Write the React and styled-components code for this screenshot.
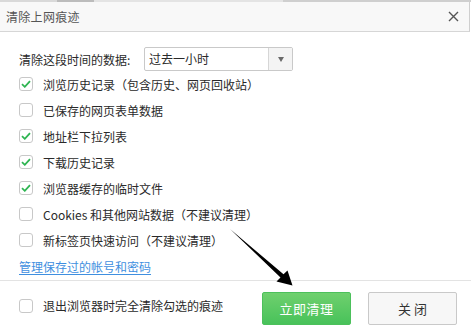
import React from "react";
import styled, { createGlobalStyle } from "styled-components";

const Global = createGlobalStyle`
  html, body { margin: 0; padding: 0; background: #fff; }
  body { font-family: "Noto Sans CJK SC", "Microsoft YaHei", sans-serif; width: 471px; height: 329px; overflow: hidden; }
`;

const Page = styled.div`
  position: relative;
  width: 471px;
  height: 329px;
  background: #fff;
`;

const TopStrip = styled.div`
  height: 2px;
  background: linear-gradient(90deg, #d9d9d9 0 12%, #bcbcbc 12% 20%, #e4e4e4 20% 60%, #cfcfcf 60% 100%);
`;

const TitleBar = styled.div`
  height: 29px;
  display: flex;
  align-items: center;
  justify-content: space-between;
  padding: 0 9px 0 6px;
  background: #f8f8f8;
  border-bottom: 1px solid #d6d6d6;
  border-right: 1px solid #cfcfcf;
  margin-right: 1px;
`;

const Title = styled.span`
  font-size: 12px;
  color: #555;
  letter-spacing: 0.3px;
`;

const CloseX = styled.svg`
  width: 11px;
  height: 11px;
  margin-right: 1px;
`;

const Content = styled.div`
  padding: 15px 0 0 19px;
  height: 229px;
  box-sizing: border-box;
`;

const RangeRow = styled.div`
  display: flex;
  align-items: center;
  height: 24px;
  font-size: 12px;
  color: #2a2a2a;
`;

const RangeLabel = styled.span`
  width: 125px;
`;

const Select = styled.div`
  display: flex;
  width: 149px;
  height: 24px;
  box-sizing: border-box;
  border: 1px solid #c9c9c9;
  border-radius: 2px;
  background: #fff;
`;

const SelectValue = styled.span`
  flex: 1;
  padding-left: 4px;
  line-height: 22px;
  font-size: 12px;
  color: #2a2a2a;
`;

const SelectArrow = styled.span`
  width: 23px;
  border-left: 1px solid #d6d6d6;
  background: #f4f4f4;
  display: flex;
  align-items: center;
  justify-content: center;
  &::after {
    content: "";
    border-left: 3.5px solid transparent;
    border-right: 3.5px solid transparent;
    border-top: 5px solid #6a6a6a;
    margin-top: 1px;
  }
`;

const OptionRow = styled.label`
  display: flex;
  align-items: center;
  height: 26px;
  font-size: 12px;
  color: #2a2a2a;
`;

const Box = styled.span`
  width: 14px;
  height: 14px;
  box-sizing: border-box;
  border: 1px solid #c8c8c8;
  border-radius: 3px;
  background: #fff;
  display: inline-flex;
  align-items: center;
  justify-content: center;
  margin-right: 10px;
  flex-shrink: 0;
`;

const LinkRow = styled.div`
  height: 24px;
  display: flex;
  align-items: center;
  margin-top: 1px;
`;

const Link = styled.a`
  font-size: 12px;
  color: #3f8fe0;
  text-decoration: underline;
  text-underline-offset: 2px;
  cursor: pointer;
`;

const Footer = styled.div`
  border-top: 1px solid #e3e3e3;
  margin-top: 19px;
  height: 51px;
  display: flex;
  align-items: center;
  padding: 0 14px 0 19px;
`;

const FooterCheck = styled(OptionRow)`
  flex: 1;
  margin-top: -2px;
`;

const Button = styled.button`
  width: ${(p) => p.$w}px;
  height: 33px;
  margin-top: 3px;
  margin-left: ${(p) => p.$ml || 0}px;
  font-family: inherit;
  font-size: 13px;
  border-radius: 2px;
  cursor: pointer;
  color: ${(p) => (p.$primary ? "#fff" : "#333")};
  border: 1px solid ${(p) => (p.$primary ? "#4cc05b" : "#c9c9c9")};
  background: ${(p) =>
    p.$primary ? "linear-gradient(#6fd06e, #48c25a)" : "#f7f7f7"};
  letter-spacing: ${(p) => (p.$primary ? "0.5px" : "0")};
`;

const ArrowSvg = styled.svg`
  position: absolute;
  left: 0;
  top: 0;
  width: 471px;
  height: 329px;
  pointer-events: none;
`;

const Check = () => (
  <svg width="10" height="8" viewBox="0 0 10 8">
    <path d="M1 4.2 L3.8 6.8 L9 1.2" fill="none" stroke="#2fb552" strokeWidth="1.8" />
  </svg>
);

const Option = ({ checked, children, as: Comp = OptionRow }) => (
  <Comp>
    <Box>{checked && <Check />}</Box>
    {children}
  </Comp>
);

const options = [
  ["浏览历史记录（包含历史、网页回收站）", true],
  ["已保存的网页表单数据", false],
  ["地址栏下拉列表", true],
  ["下载历史记录", true],
  ["浏览器缓存的临时文件", true],
  ["Cookies 和其他网站数据（不建议清理）", false],
  ["新标签页快速访问（不建议清理）", false],
];

export default function App() {
  return (
    <Page>
      <Global />
      <TopStrip />
      <TitleBar>
        <Title>清除上网痕迹</Title>
        <CloseX viewBox="0 0 11 11">
          <path d="M1 1 L10 10 M10 1 L1 10" stroke="#555" strokeWidth="1.4" />
        </CloseX>
      </TitleBar>
      <Content>
        <RangeRow>
          <RangeLabel>清除这段时间的数据:</RangeLabel>
          <Select>
            <SelectValue>过去一小时</SelectValue>
            <SelectArrow />
          </Select>
        </RangeRow>
        {options.map(([label, checked]) => (
          <Option key={label} checked={checked}>
            {label}
          </Option>
        ))}
        <LinkRow>
          <Link>管理保存过的帐号和密码</Link>
        </LinkRow>
      </Content>
      <Footer>
        <Option as={FooterCheck}>退出浏览器时完全清除勾选的痕迹</Option>
        <Button $primary $w={89}>立即清理</Button>
        <Button $w={89} $ml={17}>关 闭</Button>
      </Footer>
      <ArrowSvg viewBox="0 0 471 329">
        <polygon
          points="230,229 283.5,274.3 287.5,270.5 292.5,285.5 276.5,281.5 280.5,277.6"
          fill="#000"
        />
      </ArrowSvg>
    </Page>
  );
}
